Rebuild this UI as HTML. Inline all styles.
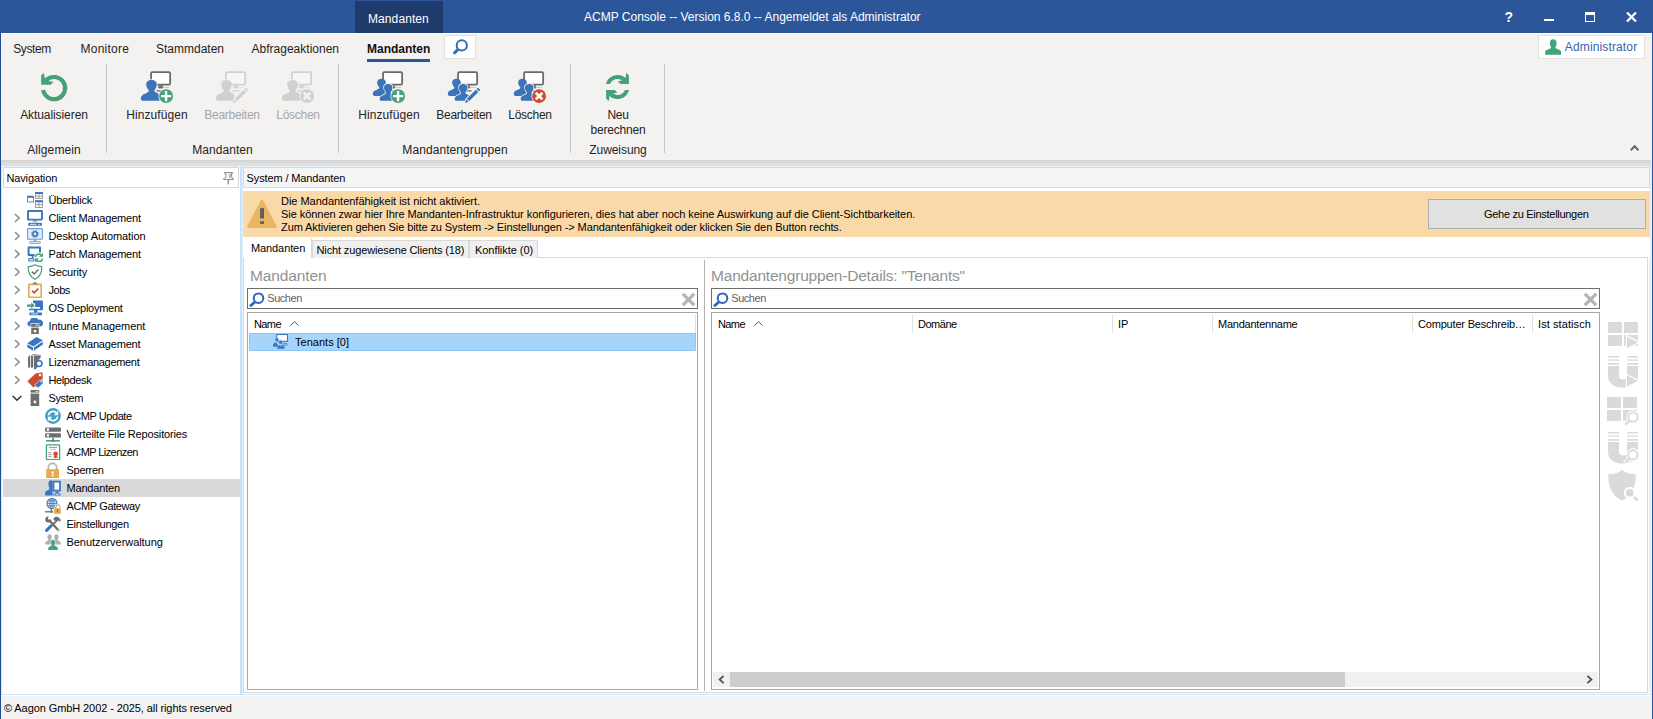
<!DOCTYPE html>
<html lang="de">
<head>
<meta charset="utf-8">
<title>ACMP Console</title>
<style>
*{box-sizing:border-box;margin:0;padding:0}
html,body{width:1653px;height:719px;overflow:hidden;background:#f3f2f1}
body{position:relative;font-family:"Liberation Sans",sans-serif;font-size:12px;color:#1e1e1e}
.abs,.abs *{position:absolute}
.t{white-space:pre;line-height:16px;height:16px}
#title{left:0;top:0;width:1653px;height:33px;background:#2b579a;color:#fff}
#ctab{left:355px;top:1px;width:88px;height:32px;background:#1f3b6b}
#ribbon{left:1px;top:33px;width:1650px;height:127px;background:#f3f2f1}
.sep{width:1px;top:31px;height:89px;background:#c8c6c4}
.rl{font-size:12px;text-align:center;line-height:15px;white-space:pre;color:#252423}
.dis{color:#a6a6a6}
#strip{left:1px;top:160px;width:1650px;height:5px;background:linear-gradient(#d3d3d3,#e2e2e2)}
#dock{left:1px;top:165px;width:1651px;height:530px;background:#e4f2fd}
#bl{left:0;top:33px;width:1.1px;height:686px;background:#1f4e98}
#br{left:1651.7px;top:33px;width:1.3px;height:686px;background:#2b579a}
#status{left:1px;top:695px;width:1651px;height:24px;background:#f3f2f1;font-size:11px;border-top:1px solid #fdfcfb}
.tah{font-size:11px;letter-spacing:-0.1px;color:#000}
#nav{left:1.4px;top:2px;width:237.6px;height:526.8px;background:#fff}
#navh{left:0.6px;top:0;width:236px;height:21px;border:1px solid #d9d9d9;background:#fff}
.tr{left:0.6px;width:237px;height:18px}
.tr .t{top:1px}
.arrow{left:11px;top:4px;width:10px;height:10px}
#main{left:242px;top:2px;width:1407px;height:526.8px;background:#fff}
#mainh{left:0px;top:0;width:1406.6px;height:21px;border:1px solid #d9d9d9;background:#f5f5f5}
#banner{left:0;top:24px;width:1407px;height:46px;background:#fad9a8}
#btn{left:1185px;top:8px;width:218px;height:30px;background:#e1e1e1;border:1px solid #adadad}
.tab{top:73px;height:18px;border:1px solid #d9d9d9;border-bottom:none;background:#f0f0f0;line-height:17px;padding-left:4px}
#page{left:0;top:90px;width:1405px;height:436px;border:1px solid #d9d9d9;background:#fff}
.h1{font-size:15.5px;color:#929292;line-height:20px;white-space:pre}
.search{height:21px;border:1px solid #6e6e6e;background:#fff}
.grid{border:1px solid #a5a5ad;background:#fff}
.ch{top:1px;height:20px;line-height:20px}
.cs{top:2px;width:1px;height:18px;background:#e0e0e0}
</style>
</head>
<body class="abs">
<div id="title">
  <div id="ctab"><span class="t" style="letter-spacing:0.09px;left:13px;top:10px">Mandanten</span></div>
  <span class="t" style="left:584px;top:9px">ACMP Console -- Version 6.8.0 -- Angemeldet als Administrator</span>
  <span class="t" style="left:1504.5px;top:9px;font-weight:700;font-size:14px">?</span>
  <div style="left:1544px;top:19px;width:10px;height:2px;background:#fff"></div>
  <div style="left:1585px;top:12px;width:10px;height:10px;border:1px solid #fff;border-top-width:3px"></div>
  <svg style="left:1626px;top:12px" width="11" height="10" viewBox="0 0 11 10"><path d="M1 0.5 L10 9.5 M10 0.5 L1 9.5" stroke="#fff" stroke-width="2.2"/></svg>
</div>
<div style="left:1px;top:33px;width:1651px;height:1px;background:#fbfbfb;z-index:2"></div><div id="bl"></div><div id="br"></div>
<div id="ribbon">
  <!-- tab row -->
  <span class="t" style="letter-spacing:-0.39px;left:12.2px;top:8px">System</span>
  <span class="t" style="letter-spacing:0.25px;left:79.5px;top:8px">Monitore</span>
  <span class="t" style="letter-spacing:-0.00px;left:155px;top:8px">Stammdaten</span>
  <span class="t" style="letter-spacing:0.01px;left:250.5px;top:8px">Abfrageaktionen</span>
  <span class="t" style="left:366px;top:8px;font-weight:700;color:#111">Mandanten</span>
  <div style="left:366px;top:26px;width:63px;height:3px;background:#2b579a"></div>
  <div style="left:443.2px;top:2.2px;width:31.8px;height:23.8px;background:#fff;border:1px solid #e3e1df"><svg style="left:5.8px;top:1.9px" width="18" height="18" viewBox="0 0 18 18"><circle cx="10.8" cy="7.4" r="5.1" fill="none" stroke="#2f6fb5" stroke-width="2"/><path d="M7 11.4L2.7 15.7" stroke="#2f6fb5" stroke-width="3"/></svg></div>
  <div style="left:1536.6px;top:2.2px;width:107.6px;height:23.6px;background:#fff;border:1px solid #e4e2e0">
    <svg style="left:6.4px;top:2.8px" width="16" height="16" viewBox="0 0 16 16"><ellipse cx="8.2" cy="4.4" rx="3.3" ry="4.2" fill="#3ea679"/><path d="M0.2 15.8V13C0.2 10.6 4.4 10.6 6 9V6H10.4V9C12 10.6 16.2 10.6 16.2 13V15.8Z" fill="#3ea679"/></svg>
    <span class="t" style="letter-spacing:0.14px;left:26.2px;top:2.8px;color:#3564ae">Administrator</span>
  </div>
  <!-- separators -->
  <div class="sep" style="left:105px"></div>
  <div class="sep" style="left:337px"></div>
  <div class="sep" style="left:569px"></div>
  <div class="sep" style="left:663px"></div>
  <svg style="left:36px;top:38px;overflow:visible" width="32" height="32" viewBox="0 0 32 32"><path d="M7.9 7.6A13.2 13.2 0 1 1 4.05 19.2L8.24 18.8A9 9 0 1 0 11.27 10.2L16.56 10.74L13.65 13.65H4.13V4.4L6.78 2.02Z" fill="#47a07a"/></svg>
<svg style="left:140px;top:38px;overflow:visible" width="32" height="32" viewBox="0 0 32 32"><rect x="10.05" y="1.1" width="19.1" height="12.45" rx="1.3" fill="#fff" stroke="#6b6b6b" stroke-width="1.8"/><rect x="17.3" y="14.4" width="4.6" height="3" fill="#6b6b6b"/><rect x="21.9" y="16" width="6" height="1" fill="#c8c8c8"/><rect x="15.5" y="19.2" width="8" height="1.3" fill="#6b6b6b"/><path d="M10.5 8.9C13.8 8.9 15.8 10.8 15.8 13.2C15.8 15.6 14.6 17.8 13.4 19.2V20.2C14.4 21.8 18.5 21.8 18.5 25V29.8H2.4C0.8 29.8 -0.1 28.8 -0.1 27.4C-0.1 22.6 6.4 22.8 7.8 20.2V19.2C6.4 17.8 5.2 15.6 5.2 13.2C5.2 10.8 7.2 8.9 10.5 8.9Z" fill="#3b74b8" stroke="#f3f2f1" stroke-width="1.50" paint-order="stroke"/><circle cx="25.1" cy="25.1" r="7.7" fill="#f3f2f1"/><circle cx="25.1" cy="25.1" r="6.95" fill="#47a07a"/><path d="M20.0 25.1h10.2M25.1 20.0v10.2" stroke="#fff" stroke-width="2.4"/></svg>
<svg style="left:215px;top:38px;overflow:visible" width="32" height="32" viewBox="0 0 32 32"><rect x="10.05" y="1.1" width="19.1" height="12.45" rx="1.3" fill="#f6f6f6" stroke="#d2d2d2" stroke-width="1.8"/><rect x="17.3" y="14.4" width="4.6" height="3" fill="#d2d2d2"/><rect x="21.9" y="16" width="6" height="1" fill="#e4e4e4"/><rect x="15.5" y="19.2" width="8" height="1.3" fill="#d2d2d2"/><path d="M10.5 8.9C13.8 8.9 15.8 10.8 15.8 13.2C15.8 15.6 14.6 17.8 13.4 19.2V20.2C14.4 21.8 18.5 21.8 18.5 25V29.8H2.4C0.8 29.8 -0.1 28.8 -0.1 27.4C-0.1 22.6 6.4 22.8 7.8 20.2V19.2C6.4 17.8 5.2 15.6 5.2 13.2C5.2 10.8 7.2 8.9 10.5 8.9Z" fill="#d0d0d0" stroke="#f3f2f1" stroke-width="1.50" paint-order="stroke"/><path d="M16.2 32.8L17.6 27.6L29.6 15.6L33.4 19.4L21.4 31.4Z" fill="#f3f2f1"/><path d="M17.1 31.9L18.3 28.3L20.7 30.7Z" fill="#d0d0d0"/><path d="M18.9 27.7L27.8 18.8L30.2 21.2L21.3 30.1Z" fill="#d0d0d0"/><path d="M28.5 18.1L29.9 16.7L32.3 19.1L30.9 20.5Z" fill="#d0d0d0"/></svg>
<svg style="left:281px;top:38px;overflow:visible" width="32" height="32" viewBox="0 0 32 32"><rect x="10.05" y="1.1" width="19.1" height="12.45" rx="1.3" fill="#f6f6f6" stroke="#d2d2d2" stroke-width="1.8"/><rect x="17.3" y="14.4" width="4.6" height="3" fill="#d2d2d2"/><rect x="21.9" y="16" width="6" height="1" fill="#e4e4e4"/><rect x="15.5" y="19.2" width="8" height="1.3" fill="#d2d2d2"/><path d="M10.5 8.9C13.8 8.9 15.8 10.8 15.8 13.2C15.8 15.6 14.6 17.8 13.4 19.2V20.2C14.4 21.8 18.5 21.8 18.5 25V29.8H2.4C0.8 29.8 -0.1 28.8 -0.1 27.4C-0.1 22.6 6.4 22.8 7.8 20.2V19.2C6.4 17.8 5.2 15.6 5.2 13.2C5.2 10.8 7.2 8.9 10.5 8.9Z" fill="#d0d0d0" stroke="#f3f2f1" stroke-width="1.50" paint-order="stroke"/><circle cx="25.1" cy="25.1" r="7.7" fill="#f3f2f1"/><circle cx="25.1" cy="25.1" r="6.95" fill="#d0d0d0"/><path d="M21.8 21.8l6.6 6.6M28.400000000000002 21.8l-6.6 6.6" stroke="#f3f2f1" stroke-width="2.7"/></svg>
<svg style="left:372px;top:38px;overflow:visible" width="32" height="32" viewBox="0 0 32 32"><rect x="10.05" y="1.1" width="19.1" height="12.45" rx="1.3" fill="#fff" stroke="#6b6b6b" stroke-width="1.8"/><rect x="17.3" y="14.4" width="4.6" height="3" fill="#6b6b6b"/><rect x="21.9" y="16" width="6" height="1" fill="#c8c8c8"/><rect x="15.5" y="19.2" width="8" height="1.3" fill="#6b6b6b"/><path d="M10.5 8.9C13.8 8.9 15.8 10.8 15.8 13.2C15.8 15.6 14.6 17.8 13.4 19.2V20.2C14.4 21.8 18.5 21.8 18.5 25V29.8H2.4C0.8 29.8 -0.1 28.8 -0.1 27.4C-0.1 22.6 6.4 22.8 7.8 20.2V19.2C6.4 17.8 5.2 15.6 5.2 13.2C5.2 10.8 7.2 8.9 10.5 8.9Z" fill="#3b74b8" transform="translate(-0.11 0.54) scale(0.82)"/><path d="M10.5 8.9C13.8 8.9 15.8 10.8 15.8 13.2C15.8 15.6 14.6 17.8 13.4 19.2V20.2C14.4 21.8 18.5 21.8 18.5 25V29.8H2.4C0.8 29.8 -0.1 28.8 -0.1 27.4C-0.1 22.6 6.4 22.8 7.8 20.2V19.2C6.4 17.8 5.2 15.6 5.2 13.2C5.2 10.8 7.2 8.9 10.5 8.9Z" fill="#3b74b8" stroke="#f3f2f1" stroke-width="1.88" paint-order="stroke" transform="translate(6.8 6) scale(0.8)"/><circle cx="25.1" cy="25.1" r="7.7" fill="#f3f2f1"/><circle cx="25.1" cy="25.1" r="6.95" fill="#47a07a"/><path d="M20.0 25.1h10.2M25.1 20.0v10.2" stroke="#fff" stroke-width="2.4"/></svg>
<svg style="left:447px;top:38px;overflow:visible" width="32" height="32" viewBox="0 0 32 32"><rect x="10.05" y="1.1" width="19.1" height="12.45" rx="1.3" fill="#fff" stroke="#6b6b6b" stroke-width="1.8"/><rect x="17.3" y="14.4" width="4.6" height="3" fill="#6b6b6b"/><rect x="21.9" y="16" width="6" height="1" fill="#c8c8c8"/><rect x="15.5" y="19.2" width="8" height="1.3" fill="#6b6b6b"/><path d="M10.5 8.9C13.8 8.9 15.8 10.8 15.8 13.2C15.8 15.6 14.6 17.8 13.4 19.2V20.2C14.4 21.8 18.5 21.8 18.5 25V29.8H2.4C0.8 29.8 -0.1 28.8 -0.1 27.4C-0.1 22.6 6.4 22.8 7.8 20.2V19.2C6.4 17.8 5.2 15.6 5.2 13.2C5.2 10.8 7.2 8.9 10.5 8.9Z" fill="#3b74b8" transform="translate(-0.11 0.54) scale(0.82)"/><path d="M10.5 8.9C13.8 8.9 15.8 10.8 15.8 13.2C15.8 15.6 14.6 17.8 13.4 19.2V20.2C14.4 21.8 18.5 21.8 18.5 25V29.8H2.4C0.8 29.8 -0.1 28.8 -0.1 27.4C-0.1 22.6 6.4 22.8 7.8 20.2V19.2C6.4 17.8 5.2 15.6 5.2 13.2C5.2 10.8 7.2 8.9 10.5 8.9Z" fill="#3b74b8" stroke="#f3f2f1" stroke-width="1.88" paint-order="stroke" transform="translate(6.8 6) scale(0.8)"/><path d="M16.2 32.8L17.6 27.6L29.6 15.6L33.4 19.4L21.4 31.4Z" fill="#f3f2f1"/><path d="M17.1 31.9L18.3 28.3L20.7 30.7Z" fill="#3b74b8"/><path d="M18.9 27.7L27.8 18.8L30.2 21.2L21.3 30.1Z" fill="#3b74b8"/><path d="M28.5 18.1L29.9 16.7L32.3 19.1L30.9 20.5Z" fill="#3b74b8"/></svg>
<svg style="left:513px;top:38px;overflow:visible" width="32" height="32" viewBox="0 0 32 32"><rect x="10.05" y="1.1" width="19.1" height="12.45" rx="1.3" fill="#fff" stroke="#6b6b6b" stroke-width="1.8"/><rect x="17.3" y="14.4" width="4.6" height="3" fill="#6b6b6b"/><rect x="21.9" y="16" width="6" height="1" fill="#c8c8c8"/><rect x="15.5" y="19.2" width="8" height="1.3" fill="#6b6b6b"/><path d="M10.5 8.9C13.8 8.9 15.8 10.8 15.8 13.2C15.8 15.6 14.6 17.8 13.4 19.2V20.2C14.4 21.8 18.5 21.8 18.5 25V29.8H2.4C0.8 29.8 -0.1 28.8 -0.1 27.4C-0.1 22.6 6.4 22.8 7.8 20.2V19.2C6.4 17.8 5.2 15.6 5.2 13.2C5.2 10.8 7.2 8.9 10.5 8.9Z" fill="#3b74b8" transform="translate(-0.11 0.54) scale(0.82)"/><path d="M10.5 8.9C13.8 8.9 15.8 10.8 15.8 13.2C15.8 15.6 14.6 17.8 13.4 19.2V20.2C14.4 21.8 18.5 21.8 18.5 25V29.8H2.4C0.8 29.8 -0.1 28.8 -0.1 27.4C-0.1 22.6 6.4 22.8 7.8 20.2V19.2C6.4 17.8 5.2 15.6 5.2 13.2C5.2 10.8 7.2 8.9 10.5 8.9Z" fill="#3b74b8" stroke="#f3f2f1" stroke-width="1.88" paint-order="stroke" transform="translate(6.8 6) scale(0.8)"/><circle cx="25.1" cy="25.1" r="7.7" fill="#f3f2f1"/><circle cx="25.1" cy="25.1" r="6.95" fill="#cf4a30"/><path d="M21.8 21.8l6.6 6.6M28.400000000000002 21.8l-6.6 6.6" stroke="#fff" stroke-width="2.7"/></svg>
<svg style="left:601px;top:38px;overflow:visible" width="32" height="32" viewBox="0 0 32 32"><path d="M3.9 12.9A12.1 12.1 0 0 1 23.6 7L24.3 1.8L26.9 4.4V12.9H18.2L15.8 10.2L20 9.4A8.2 8.2 0 0 0 7.9 12.9Z" fill="#47a07a"/><path d="M3.9 12.9A12.1 12.1 0 0 1 23.6 7L24.3 1.8L26.9 4.4V12.9H18.2L15.8 10.2L20 9.4A8.2 8.2 0 0 0 7.9 12.9Z" fill="#47a07a" transform="rotate(180 15.5 16)"/></svg>
  <!-- button labels -->
  <div class="rl" style="letter-spacing:-0.08px;left:13px;top:75px;width:80px">Aktualisieren</div>
  <div class="rl" style="letter-spacing:0.06px;left:116px;top:75px;width:80px">Hinzufügen</div>
  <div class="rl dis" style="letter-spacing:-0.25px;left:191px;top:75px;width:80px">Bearbeiten</div>
  <div class="rl dis" style="letter-spacing:-0.28px;left:257px;top:75px;width:80px">Löschen</div>
  <div class="rl" style="letter-spacing:0.06px;left:348px;top:75px;width:80px">Hinzufügen</div>
  <div class="rl" style="letter-spacing:-0.25px;left:423px;top:75px;width:80px">Bearbeiten</div>
  <div class="rl" style="letter-spacing:-0.28px;left:489px;top:75px;width:80px">Löschen</div>
  <div class="rl" style="letter-spacing:-0.27px;left:577px;top:75px;width:80px">Neu</div><div class="rl" style="letter-spacing:-0.18px;left:577px;top:90px;width:80px">berechnen</div>
  <svg style="left:1628.9px;top:110.6px" width="10" height="8" viewBox="0 0 10 8"><path d="M0.8 6.2L4.6 2.2L8.4 6.2" fill="none" stroke="#666" stroke-width="2"/></svg>
  <!-- group labels -->
  <div class="rl" style="letter-spacing:0.10px;left:13px;top:110px;width:80px">Allgemein</div>
  <div class="rl" style="letter-spacing:0.04px;left:171.5px;top:110px;width:100px">Mandanten</div>
  <div class="rl" style="letter-spacing:0.08px;left:384px;top:110px;width:140px">Mandantengruppen</div>
  <div class="rl" style="letter-spacing:-0.07px;left:577px;top:110px;width:80px">Zuweisung</div>
</div>
<div id="strip"></div>
<div id="dock">
  <div id="nav" class="tah">
    <div id="navh"><span class="t" style="letter-spacing:-0.12px;left:2.4px;top:2px">Navigation</span><svg style="left:219px;top:4px" width="11" height="13" viewBox="0 0 11 13"><path d="M1.5 0.6H9.5V1.6H8.4L8.8 5.6L10.4 6.6V7.6H0.6V6.6L2.6 5.6L3.2 3.6L2.2 1.6H1.5Z" fill="#f4f4f4" stroke="#8a8a8a" stroke-width="1"/><path d="M7 2v4" stroke="#b0b0b0" stroke-width="1.6"/><path d="M5.6 7.6L5 12.4" stroke="#8a8a8a" stroke-width="1.3"/></svg></div>
    <div id="tree" style="left:0;top:24px;width:237px;height:400px"><div class="tr" style="top:0px;"><svg style="left:24px;top:1px" width="16" height="16" viewBox="0 0 16 16"><rect x="0.5" y="4.5" width="6" height="5.5" fill="#fff" stroke="#8a8a8a"/><rect x="0" y="3.7" width="7" height="2" rx="0.6" fill="#3b76c0"/>
<rect x="8.5" y="0.5" width="7" height="6" fill="#fff" stroke="#a0a0a0"/><rect x="8" y="0" width="8" height="2.1" rx="0.6" fill="#3b76c0"/><path d="M12 2v5M8.5 4.2h7" stroke="#a0a0a0" stroke-width="1" fill="none"/>
<rect x="8.5" y="9" width="7" height="6.5" fill="#fff" stroke="#a0a0a0"/><rect x="8" y="8.2" width="8" height="2.1" rx="0.6" fill="#3b76c0"/><path d="M12 10v5.5M8.5 12.6h7" stroke="#a0a0a0" stroke-width="1" fill="none"/></svg><span class="t" style="letter-spacing:-0.27px;left:45.5px">Überblick</span></div>
<div class="tr" style="top:18px;"><svg style="left:11px;top:4px" width="7" height="10" viewBox="0 0 7 10"><path d="M1 1.2L5.1 5L1 8.8" fill="none" stroke="#929292" stroke-width="1.6"/></svg><svg style="left:24px;top:1px" width="16" height="16" viewBox="0 0 16 16"><rect x="1" y="1" width="14" height="8.6" rx="0.5" fill="#fff" stroke="#3b76c0" stroke-width="1.9"/><path d="M5.6 11.6L6.4 10.4H9.6L10.4 11.6Z" fill="#3b76c0"/><rect x="1.2" y="12.8" width="13.8" height="3" rx="1" fill="#3b76c0"/><rect x="3" y="13.9" width="6.4" height="0.8" fill="#fff"/><rect x="11.4" y="13.9" width="1.6" height="0.8" fill="#fff"/></svg><span class="t" style="letter-spacing:-0.18px;left:45.5px">Client Management</span></div>
<div class="tr" style="top:36px;"><svg style="left:11px;top:4px" width="7" height="10" viewBox="0 0 7 10"><path d="M1 1.2L5.1 5L1 8.8" fill="none" stroke="#929292" stroke-width="1.6"/></svg><svg style="left:24px;top:1px" width="16" height="16" viewBox="0 0 16 16"><rect x="0.6" y="0.6" width="14.8" height="10.6" rx="0.8" fill="#e6eefa" stroke="#6c9ad4" stroke-width="1.1"/><circle cx="8" cy="5.9" r="3.1" fill="none" stroke="#3b76c0" stroke-width="1.5" stroke-dasharray="1.25 1.18"/><circle cx="8" cy="5.9" r="2.1" fill="none" stroke="#3b76c0" stroke-width="1.5"/><rect x="7" y="11.5" width="2" height="1.8" fill="#6c9ad4"/><rect x="2.6" y="13.4" width="10.8" height="2" rx="0.8" fill="#e6eefa" stroke="#6c9ad4" stroke-width="0.9"/></svg><span class="t" style="letter-spacing:-0.08px;left:45.5px">Desktop Automation</span></div>
<div class="tr" style="top:54px;"><svg style="left:11px;top:4px" width="7" height="10" viewBox="0 0 7 10"><path d="M1 1.2L5.1 5L1 8.8" fill="none" stroke="#929292" stroke-width="1.6"/></svg><svg style="left:24px;top:1px" width="16" height="16" viewBox="0 0 16 16"><path d="M7.6 9H1.6V1.4H13V6.4" fill="#fff" stroke="#3b76c0" stroke-width="2" stroke-linejoin="round"/><path d="M5.6 10v2" stroke="#3b76c0" stroke-width="1.8"/><rect x="1.6" y="12.6" width="5.4" height="2.4" rx="1" fill="#fff" stroke="#3b76c0" stroke-width="1.1"/>
<path d="M8.3 11.2a3.6 3.6 0 0 1 6-2.2" fill="none" stroke="#47a07a" stroke-width="1.6"/><path d="M16 6.8v4h-4z" fill="#47a07a"/><path d="M15.7 12.4a3.6 3.6 0 0 1-6 2.2" fill="none" stroke="#47a07a" stroke-width="1.6"/><path d="M8 16.6v-4h4z" fill="#47a07a"/></svg><span class="t" style="letter-spacing:-0.19px;left:45.5px">Patch Management</span></div>
<div class="tr" style="top:72px;"><svg style="left:11px;top:4px" width="7" height="10" viewBox="0 0 7 10"><path d="M1 1.2L5.1 5L1 8.8" fill="none" stroke="#929292" stroke-width="1.6"/></svg><svg style="left:24px;top:1px" width="16" height="16" viewBox="0 0 16 16"><path d="M8 0.8C6 2 3.5 2.6 1.2 2.6C1 8 3 12.8 8 15.3C13 12.8 15 8 14.8 2.6C12.5 2.6 10 2 8 0.8Z" fill="#fff" stroke="#47a07a" stroke-width="1.2" stroke-linejoin="round"/><path d="M4.8 7.6l2.4 2.4l4.2-4.4" fill="none" stroke="#6e6e6e" stroke-width="1.5"/></svg><span class="t" style="letter-spacing:-0.14px;left:45.5px">Security</span></div>
<div class="tr" style="top:90px;"><svg style="left:11px;top:4px" width="7" height="10" viewBox="0 0 7 10"><path d="M1 1.2L5.1 5L1 8.8" fill="none" stroke="#929292" stroke-width="1.6"/></svg><svg style="left:24px;top:1px" width="16" height="16" viewBox="0 0 16 16"><rect x="1.8" y="2.3" width="12.4" height="13" rx="0.6" fill="#fff" stroke="#e8ab4e" stroke-width="1.7"/><path d="M5.5 2.6h5v-1.4h-1.4v-1.2h-2.2v1.2h-1.4z" fill="#8a8a8a"/><path d="M5 8.6l2.2 2.3l4-4.3" fill="none" stroke="#d04a30" stroke-width="1.6"/></svg><span class="t" style="letter-spacing:-0.46px;left:45.5px">Jobs</span></div>
<div class="tr" style="top:108px;"><svg style="left:11px;top:4px" width="7" height="10" viewBox="0 0 7 10"><path d="M1 1.2L5.1 5L1 8.8" fill="none" stroke="#929292" stroke-width="1.6"/></svg><svg style="left:24px;top:1px" width="16" height="16" viewBox="0 0 16 16"><path d="M6 0.5h9.2a0.8 0.8 0 0 1 0.8 0.8v8.2a0.8 0.8 0 0 1-0.8 0.8H2v-1.6h11V7H8.2V3.2H6z" fill="#3b76c0"/><rect x="7" y="10" width="3.4" height="2.6" fill="#3b76c0"/><rect x="2.4" y="12.4" width="12.6" height="2.9" rx="0.9" fill="#3b76c0"/><rect x="4" y="13.5" width="7" height="0.8" fill="#fff"/>
<path d="M0 4.5h4.2V2.6L7.8 5.6L4.2 8.6V6.7H0z" fill="#47a07a"/></svg><span class="t" style="letter-spacing:-0.28px;left:45.5px">OS Deployment</span></div>
<div class="tr" style="top:126px;"><svg style="left:11px;top:4px" width="7" height="10" viewBox="0 0 7 10"><path d="M1 1.2L5.1 5L1 8.8" fill="none" stroke="#929292" stroke-width="1.6"/></svg><svg style="left:24px;top:1px" width="16" height="16" viewBox="0 0 16 16"><path d="M2.6 8.6A2.9 2.9 0 0 1 2.9 2.9A4.4 4.4 0 0 1 11.2 1.7A3.5 3.5 0 0 1 13.6 8.6Z" fill="#3b76c0"/><rect x="3.6" y="5.2" width="8.8" height="4.6" fill="#fff"/><rect x="4.2" y="5.8" width="7.6" height="3" fill="#6e6e6e"/><rect x="8.6" y="6.6" width="2.4" height="0.9" fill="#fff"/><rect x="4.2" y="9.6" width="7.6" height="6.4" fill="#6e6e6e"/><rect x="6.8" y="12" width="2.4" height="2.4" fill="#fff"/></svg><span class="t" style="letter-spacing:-0.06px;left:45.5px">Intune Management</span></div>
<div class="tr" style="top:144px;"><svg style="left:11px;top:4px" width="7" height="10" viewBox="0 0 7 10"><path d="M1 1.2L5.1 5L1 8.8" fill="none" stroke="#929292" stroke-width="1.6"/></svg><svg style="left:24px;top:1px" width="16" height="16" viewBox="0 0 16 16"><path d="M0.3 7.2L9.6 1L15.8 4.2L6.4 10.6Z" fill="#3b76c0"/><path d="M0.3 8.2L6 11.6V14.8L0.3 11.2Z" fill="#3b76c0"/><path d="M6.9 11.6L15.8 5.4V8.6L6.9 14.8Z" fill="#3b76c0"/></svg><span class="t" style="letter-spacing:-0.18px;left:45.5px">Asset Management</span></div>
<div class="tr" style="top:162px;"><svg style="left:11px;top:4px" width="7" height="10" viewBox="0 0 7 10"><path d="M1 1.2L5.1 5L1 8.8" fill="none" stroke="#929292" stroke-width="1.6"/></svg><svg style="left:24px;top:1px" width="16" height="16" viewBox="0 0 16 16"><path d="M1 3.2L3.2 0.8V13.6H1Z" fill="#6e6e6e"/><rect x="4" y="1.6" width="2.2" height="12" fill="#6e6e6e"/><path d="M7 1.2L13.6 2.2V4L11 6.5L9.6 13.6H7Z" fill="#6e6e6e"/><path d="M5.4 0.4L14 1.6" stroke="#8a8a8a" stroke-width="1"/>
<circle cx="12.2" cy="9.6" r="2.9" fill="#fff" stroke="#3b76c0" stroke-width="1.5"/><path d="M10.2 11.8L7.4 15.2" stroke="#3b76c0" stroke-width="1.9"/></svg><span class="t" style="letter-spacing:-0.32px;left:45.5px">Lizenzmanagement</span></div>
<div class="tr" style="top:180px;"><svg style="left:11px;top:4px" width="7" height="10" viewBox="0 0 7 10"><path d="M1 1.2L5.1 5L1 8.8" fill="none" stroke="#929292" stroke-width="1.6"/></svg><svg style="left:24px;top:1px" width="16" height="16" viewBox="0 0 16 16"><path d="M0.4 9.2L8.6 1.4L15.4 0.2L15.8 6.4L8.2 14.6L6.2 15.2Z" fill="#d04a30"/><circle cx="13" cy="3" r="1.3" fill="#fff"/><path d="M7.6 13.2L12.4 8.4L16 8V11.4L11 16Z" fill="#3b76c0" stroke="#f6e9e6" stroke-width="0.7"/><circle cx="14.2" cy="9.8" r="0.8" fill="#fff"/></svg><span class="t" style="letter-spacing:-0.38px;left:45.5px">Helpdesk</span></div>
<div class="tr" style="top:198px;"><svg style="left:9px;top:6px" width="10" height="7" viewBox="0 0 10 7"><path d="M0.7 1L5 5.2L9.3 1" fill="none" stroke="#333" stroke-width="1.6"/></svg><svg style="left:24px;top:1px" width="16" height="16" viewBox="0 0 16 16"><rect x="3.6" y="0" width="8.6" height="2.6" fill="#6e6e6e"/><rect x="8.8" y="0.9" width="2.4" height="0.9" fill="#fff"/><rect x="3.6" y="3.6" width="8.6" height="12.4" fill="#6e6e6e"/><circle cx="7.9" cy="12" r="1.4" fill="#fff"/></svg><span class="t" style="letter-spacing:-0.35px;left:45.5px">System</span></div>
<div class="tr" style="top:216px;"><svg style="left:42px;top:1px" width="16" height="16" viewBox="0 0 16 16"><circle cx="8" cy="8" r="7.9" fill="#45a0c5"/><path d="M3.4 7.4a4.7 4.7 0 0 1 8-2.6" fill="none" stroke="#fff" stroke-width="1.7"/><path d="M13.2 2.6v4.6H8.8z" fill="#fff"/><path d="M12.6 8.6a4.7 4.7 0 0 1-8 2.6" fill="none" stroke="#fff" stroke-width="1.7"/><path d="M2.8 13.4V8.8h4.4z" fill="#fff"/></svg><span class="t" style="letter-spacing:-0.45px;left:63.5px">ACMP Update</span></div>
<div class="tr" style="top:234px;"><svg style="left:42px;top:1px" width="16" height="16" viewBox="0 0 16 16"><rect x="0" y="1.4" width="16" height="4.4" rx="1.2" fill="#6e6e6e"/><rect x="1.8" y="2.4" width="2.2" height="2.4" fill="#fff"/><rect x="0" y="7.2" width="16" height="4.4" rx="1.2" fill="#6e6e6e"/><rect x="1.8" y="8.2" width="2.2" height="2.4" fill="#fff"/><rect x="7.2" y="11.6" width="1.6" height="2.6" fill="#47a07a"/><rect x="1" y="14" width="14" height="1.5" fill="#47a07a"/><rect x="6.4" y="13.8" width="3.2" height="1.9" fill="#7a7a7a"/></svg><span class="t" style="letter-spacing:-0.15px;left:63.5px">Verteilte File Repositories</span></div>
<div class="tr" style="top:252px;"><svg style="left:42px;top:1px" width="16" height="16" viewBox="0 0 16 16"><rect x="1.4" y="0.8" width="13.2" height="14.8" rx="0.8" fill="#fff" stroke="#47a07a" stroke-width="1.3"/><path d="M4 3.4h8M3.4 8.6h3M3.4 10.6h3M3.4 12.6h3" stroke="#8a8a8a" stroke-width="0.9"/><path d="M5 5.4h6" stroke="#b5b5b5" stroke-width="0.8"/><circle cx="10.6" cy="9.8" r="2.3" fill="#d04a30"/><path d="M9 11.4L8.6 14.2L10 13.4L10.6 14.4L11.2 13.4L12.6 14.2L12.2 11.4Z" fill="#d04a30"/></svg><span class="t" style="letter-spacing:-0.57px;left:63.5px">ACMP Lizenzen</span></div>
<div class="tr" style="top:270px;"><svg style="left:42px;top:1px" width="16" height="16" viewBox="0 0 16 16"><path d="M3.4 8V5.4a4.1 4.1 0 0 1 8.2 0V8" fill="none" stroke="#b4b4b4" stroke-width="1.7"/><rect x="1.2" y="7.2" width="12.8" height="8.8" fill="#e8ab4e"/><circle cx="7.6" cy="10.4" r="1.1" fill="#fff"/><path d="M7.6 10.4L6.8 14h1.6z" fill="#fff"/><circle cx="7.6" cy="13.6" r="0.9" fill="#fff"/></svg><span class="t" style="letter-spacing:-0.28px;left:63.5px">Sperren</span></div>
<div class="tr" style="top:288px; background:#d9d9d9;"><svg style="left:42px;top:1px" width="16" height="16" viewBox="0 0 16 16"><path d="M0.1 15.5V13C0.1 10.8 3 10.6 4.2 9.2V7.4C3.6 6.4 3.4 5.2 3.4 4C3.4 1.6 4.4 0.2 6 0.2C7 0.2 7.6 0.8 7.6 0.8V15.5Z" fill="#3b76c0"/>
<rect x="8.5" y="1.6" width="6.5" height="9" fill="#fff" stroke="#3b76c0" stroke-width="1.8"/><rect x="10.4" y="11.6" width="3.4" height="1.7" fill="#3b76c0"/><rect x="7.9" y="13.6" width="7.6" height="1.9" fill="#3b76c0"/><path d="M8.8 14.6h1.2M11.2 14.6h2.4" stroke="#fff" stroke-width="0.7"/></svg><span class="t" style="letter-spacing:-0.18px;left:63.5px">Mandanten</span></div>
<div class="tr" style="top:306px;"><svg style="left:42px;top:1px" width="16" height="16" viewBox="0 0 16 16"><circle cx="7" cy="5.5" r="5" fill="#fff" stroke="#3b76c0" stroke-width="1.1"/><ellipse cx="7" cy="5.5" rx="2.1" ry="5" fill="none" stroke="#3b76c0" stroke-width="0.9"/><path d="M2.3 5.4h9.4M3 3h8M3 7.8h8M7 0.7v9.4" stroke="#3b76c0" stroke-width="0.9" fill="none"/><rect x="0" y="13" width="6" height="1.5" fill="#47a07a"/><path d="M6.4 10.2v3.6H5.2" stroke="#7a7a7a" stroke-width="1.4" fill="none"/><rect x="5.4" y="12.8" width="2.6" height="1.9" fill="#7a7a7a"/>
<path d="M10.2 10.4V8.8a2.3 2.3 0 0 1 4.6 0v1.6" fill="none" stroke="#c8c8c8" stroke-width="1.3"/><rect x="8.8" y="10" width="7.2" height="6" fill="#e8ab4e" stroke="#f7ecd6" stroke-width="0.5"/><rect x="12" y="11.4" width="0.9" height="3" fill="#7a5a20"/></svg><span class="t" style="letter-spacing:-0.38px;left:63.5px">ACMP Gateway</span></div>
<div class="tr" style="top:324px;"><svg style="left:42px;top:1px" width="16" height="16" viewBox="0 0 16 16"><path d="M10.6 5.8L5.4 10.8" stroke="#6e6e6e" stroke-width="2"/><path d="M5.6 10.2L1.6 14.4" stroke="#3b76c0" stroke-width="3.1" stroke-linecap="round"/>
<path d="M8 2.8L10.2 0.9C12.6 0.3 14.8 1.6 15.8 4.2L14.6 5.7L13.2 4.3L11.4 6.5Z" fill="#6e6e6e"/>
<path d="M4.6 4.8L13.4 14.2" stroke="#6e6e6e" stroke-width="2.3" stroke-linecap="round"/><circle cx="13.4" cy="14.2" r="0.6" fill="#fff"/>
<path d="M3.7 0.5A3 3 0 1 0 6.3 3.3L4.2 3.9L2.9 2.7Z" fill="#6e6e6e"/></svg><span class="t" style="letter-spacing:-0.29px;left:63.5px">Einstellungen</span></div>
<div class="tr" style="top:342px;"><svg style="left:42px;top:1px" width="16" height="16" viewBox="0 0 16 16"><ellipse cx="4.6" cy="3" rx="2.2" ry="2.8" fill="#b0b0b0"/><path d="M0.2 10.4V8.8C0.2 7.2 2.4 7 3.4 6.2V5H5.8V6.2C6.8 7 9 7.2 9 8.8V10.4Z" fill="#b0b0b0"/><ellipse cx="11.4" cy="3" rx="2.2" ry="2.8" fill="#b0b0b0"/><path d="M7 10.4V8.8C7 7.2 9.2 7 10.2 6.2V5H12.6V6.2C13.6 7 15.8 7.2 15.8 8.8V10.4Z" fill="#b0b0b0"/>
<ellipse cx="8" cy="8.4" rx="2.4" ry="3" fill="#47a07a" stroke="#fff" stroke-width="0.6"/><path d="M3.2 16V14.4C3.2 12.6 5.6 12.6 6.6 11.6V10.6H9.4V11.6C10.4 12.6 12.8 12.6 12.8 14.4V16Z" fill="#47a07a"/></svg><span class="t" style="letter-spacing:-0.05px;left:63.5px">Benutzerverwaltung</span></div></div>
  </div>
  <div style="left:0;top:0;width:1651px;height:1px;background:#c9e4fc"></div><div style="left:0;top:529px;width:1651px;height:1px;background:#c9e5fc"></div><div style="left:0;top:1px;width:1.2px;height:528px;background:#d2e9fc"></div><div style="left:239.4px;top:1px;width:1.7px;height:528px;background:#c8e4fc"></div>
  <div id="main" class="tah">
    <div id="mainh"><span class="t" style="letter-spacing:-0.13px;left:2.6px;top:2px">System / Mandanten</span></div>
    <div id="banner">
      <svg style="left:3px;top:7px" width="32" height="30" viewBox="0 0 32 30"><path d="M16 3.2L29.6 28.6H2.4Z" fill="#e9b562" stroke="#e9b562" stroke-width="2.6" stroke-linejoin="round"/><rect x="14.1" y="10.2" width="3.9" height="10.2" fill="#5d5d5d"/><rect x="14.1" y="23.3" width="3.9" height="2.6" fill="#5d5d5d"/></svg><span class="t" style="letter-spacing:-0.02px;left:38px;top:2px">Die Mandantenfähigkeit ist nicht aktiviert.</span><span class="t" style="letter-spacing:-0.05px;left:38px;top:15px">Sie können zwar hier Ihre Mandanten-Infrastruktur konfigurieren, dies hat aber noch keine Auswirkung auf die Client-Sichtbarkeiten.</span><span class="t" style="letter-spacing:-0.09px;left:38px;top:28px">Zum Aktivieren gehen Sie bitte zu System -&gt; Einstellungen -&gt; Mandantenfähigkeit oder klicken Sie den Button rechts.</span>
      <div id="btn"><span class="t" style="letter-spacing:-0.29px;left:55px;top:5.5px">Gehe zu Einstellungen</span></div>
    </div>
    <div id="page"></div><div style="left:1405.5px;top:91px;width:1.5px;height:435px;background:#ececec"></div>
    <div class="tab" style="left:0;top:71px;width:69px;height:20px;background:#fff;border-color:#fff #d9d9d9 #fff #fff;padding-left:7px;line-height:18px">Mandanten</div>
    <div class="tab" style="left:69px;width:157px"><span class="t" style="letter-spacing:-0.13px;left:3.5px;top:0.5px">Nicht zugewiesene Clients (18)</span></div>
    <div class="tab" style="left:226px;width:69px"><span class="t" style="letter-spacing:-0.04px;left:5px;top:0.5px">Konflikte (0)</span></div>
    <svg style="left:1364px;top:155px;overflow:visible" width="32" height="27" viewBox="0 0 32 27"><rect x="1" y="0" width="14" height="11" fill="#dadada"/><rect x="17" y="0" width="14" height="11" fill="#dadada"/><rect x="1" y="13" width="14" height="11" fill="#dadada"/><rect x="17" y="13" width="14" height="11" fill="#dadada"/><path d="M19.4 13.6L32.2 20.3L19.4 27.0Z" fill="#dadada" stroke="#fff" stroke-width="1.2"/></svg><svg style="left:1364px;top:189px;overflow:visible" width="32" height="32" viewBox="0 0 32 32"><path d="M1 0h11v1.6H1zM1 3.6h11v1.2H1zM1 7h11v1.8H1zM20 0h11v1.6H20zM20 3.6h11v1.2H20zM20 7h11v1.8H20z" fill="#dadada"/><path d="M1 10H12V20C12 22.5 14 23.5 16 23.5C18 23.5 20 22.5 20 20V10H31V20C31 28 24 31.6 16 31.6C8 31.6 1 28 1 20Z" fill="#dadada"/><path d="M19.4 18.2L32.2 24.9L19.4 31.6Z" fill="#dadada" stroke="#fff" stroke-width="1.2"/></svg><svg style="left:1363px;top:230px;overflow:visible" width="32" height="27" viewBox="0 0 32 27"><rect x="1" y="0" width="14" height="11" fill="#dadada"/><rect x="17" y="0" width="14" height="11" fill="#dadada"/><rect x="1" y="13" width="14" height="11" fill="#dadada"/><rect x="17" y="13" width="14" height="11" fill="#dadada"/><circle cx="27" cy="20" r="6.6" fill="#fff"/><path d="M23.8 23.2L18.8 28.2" stroke="#fff" stroke-width="4.6"/><circle cx="27" cy="20" r="4.6" fill="#fff" stroke="#dadada" stroke-width="1.9"/><path d="M23.4 23.6L19.2 27.8" stroke="#dadada" stroke-width="2.5"/></svg><svg style="left:1364px;top:265px;overflow:visible" width="32" height="32" viewBox="0 0 32 32"><path d="M1 0h11v1.6H1zM1 3.6h11v1.2H1zM1 7h11v1.8H1zM20 0h11v1.6H20zM20 3.6h11v1.2H20zM20 7h11v1.8H20z" fill="#dadada"/><path d="M1 10H12V20C12 22.5 14 23.5 16 23.5C18 23.5 20 22.5 20 20V10H31V20C31 28 24 31.6 16 31.6C8 31.6 1 28 1 20Z" fill="#dadada"/><circle cx="26" cy="22.9" r="6.6" fill="#fff"/><path d="M22.8 26.099999999999998L17.8 31.099999999999998" stroke="#fff" stroke-width="4.6"/><circle cx="26" cy="22.9" r="4.6" fill="#fff" stroke="#dadada" stroke-width="1.9"/><path d="M22.4 26.5L18.2 30.7" stroke="#dadada" stroke-width="2.5"/></svg><svg style="left:1364px;top:303px;overflow:visible" width="32" height="32" viewBox="0 0 32 32"><path d="M15 0C11.4 2.8 7 4.2 1.4 4.2C0.8 15.6 4.6 25.4 15 30.6C25.4 25.4 29.2 15.6 28.6 4.2C23 4.2 18.6 2.8 15 0Z" fill="#dadada"/><path d="M25.8 25.8L31.0 31.0" stroke="#fff" stroke-width="4.4"/><path d="M25.8 25.8L30.700000000000003 30.700000000000003" stroke="#dadada" stroke-width="2.4"/><circle cx="22.8" cy="22.8" r="4.9" fill="#dadada" stroke="#fff" stroke-width="2.1"/></svg>
    <!-- left pane -->
    <div class="h1" style="letter-spacing:-0.12px;left:7px;top:98.7px">Mandanten</div>
    <div class="search" style="left:4px;top:121px;width:451px"><svg style="left:1px;top:3px" width="16" height="16" viewBox="0 0 16 16"><circle cx="9.5" cy="6.2" r="4.8" fill="#fff" stroke="#2e67b1" stroke-width="2"/><path d="M6.2 9.7L1 14.3" stroke="#2e67b1" stroke-width="2.8"/></svg><span class="t" style="letter-spacing:-0.47px;left:19.3px;top:1px;color:#606060">Suchen</span><svg style="left:433px;top:3px" width="15" height="15" viewBox="0 0 15 15"><path d="M1.8 1.8L13.2 13.2M13.2 1.8L1.8 13.2" stroke="#b4b4b4" stroke-width="3.3"/></svg></div>
    <div class="grid" style="left:4px;top:145px;width:451px;height:378px">
      <span class="t ch" style="letter-spacing:-0.60px;left:6px">Name</span><svg style="left:42px;top:8px" width="9" height="5" viewBox="0 0 9 5"><path d="M0.5 4.5L4.5 0.7L8.5 4.5" fill="none" stroke="#555" stroke-width="1"/></svg>
      <div style="left:1px;top:20px;width:447px;height:18px;background:#a6d5fb;border:1px solid #8ac8f8"></div>
      <svg style="left:25px;top:21px" width="16" height="16" viewBox="0 0 16 16"><rect x="3.7" y="0.5" width="10.8" height="6.8" fill="#fff" stroke="#3b76c0" stroke-width="1.1"/><rect x="9.9" y="9.3" width="4.2" height="2" rx="1" fill="none" stroke="#3b76c0" stroke-width="0.8"/><circle cx="3.9" cy="5.7" r="1.9" fill="#3b76c0" stroke="#a6d5fb" stroke-width="0.5"/><path d="M0 12.7V11C0 9.8 1.4 9.4 2.4 8.6L4 9.6L5.2 11.2L4 12.7Z" fill="#3b76c0"/><circle cx="7.7" cy="8.3" r="2" fill="#3b76c0" stroke="#a6d5fb" stroke-width="0.6"/><path d="M4.2 14.7V13.6C4.2 12.2 5.6 11.6 6.6 11L7.8 12L9 11C10 11.6 11.6 12.2 11.6 13.6V14.7Z" fill="#3b76c0"/></svg><span class="t" style="letter-spacing:0.02px;left:47px;top:21px">Tenants [0]</span>
      <div class="cs" style="left:447px"></div>
    </div>
    <div style="left:461px;top:93px;width:1px;height:431px;background:#b4b4b4"></div>
    <!-- right pane -->
    <div class="h1" style="letter-spacing:-0.20px;left:468px;top:98.7px">Mandantengruppen-Details: "Tenants"</div>
    <div class="search" style="left:468px;top:121px;width:889px"><svg style="left:1px;top:3px" width="16" height="16" viewBox="0 0 16 16"><circle cx="9.5" cy="6.2" r="4.8" fill="#fff" stroke="#2e67b1" stroke-width="2"/><path d="M6.2 9.7L1 14.3" stroke="#2e67b1" stroke-width="2.8"/></svg><span class="t" style="letter-spacing:-0.47px;left:19.3px;top:1px;color:#606060">Suchen</span><svg style="left:871px;top:3px" width="15" height="15" viewBox="0 0 15 15"><path d="M1.8 1.8L13.2 13.2M13.2 1.8L1.8 13.2" stroke="#b4b4b4" stroke-width="3.3"/></svg></div>
    <div class="grid" style="left:468px;top:145px;width:889px;height:378px">
      <span class="t ch" style="letter-spacing:-0.60px;left:6px">Name</span><svg style="left:42px;top:8px" width="9" height="5" viewBox="0 0 9 5"><path d="M0.5 4.5L4.5 0.7L8.5 4.5" fill="none" stroke="#555" stroke-width="1"/></svg>
      <span class="t ch" style="letter-spacing:-0.48px;left:206px">Domäne</span>
      <span class="t ch" style="left:406px">IP</span>
      <span class="t ch" style="letter-spacing:-0.24px;left:506px">Mandantenname</span>
      <span class="t ch" style="letter-spacing:-0.19px;left:706px">Computer Beschreib…</span>
      <span class="t ch" style="letter-spacing:0.08px;left:826px">Ist statisch</span>
      <div class="cs" style="left:200px"></div><div class="cs" style="left:400px"></div><div class="cs" style="left:500px"></div><div class="cs" style="left:700px"></div><div class="cs" style="left:820px"></div>
      <div style="left:1px;top:359px;width:885px;height:15px;background:#f0f0f0"></div>
      <div style="left:18px;top:359px;width:615px;height:15px;background:#cdcdcd"></div><svg style="left:6px;top:362px" width="7" height="9" viewBox="0 0 7 9"><path d="M5.6 0.8L1.6 4.5L5.6 8.2" fill="none" stroke="#505050" stroke-width="1.8"/></svg><svg style="left:874px;top:362px" width="7" height="9" viewBox="0 0 7 9"><path d="M1.4 0.8L5.4 4.5L1.4 8.2" fill="none" stroke="#505050" stroke-width="1.8"/></svg>
    </div>
  </div>
</div>
<div id="status"><span class="t tah" style="letter-spacing:-0.09px;left:3px;top:4px">© Aagon GmbH 2002 - 2025, all rights reserved</span></div>
</body>
</html>
